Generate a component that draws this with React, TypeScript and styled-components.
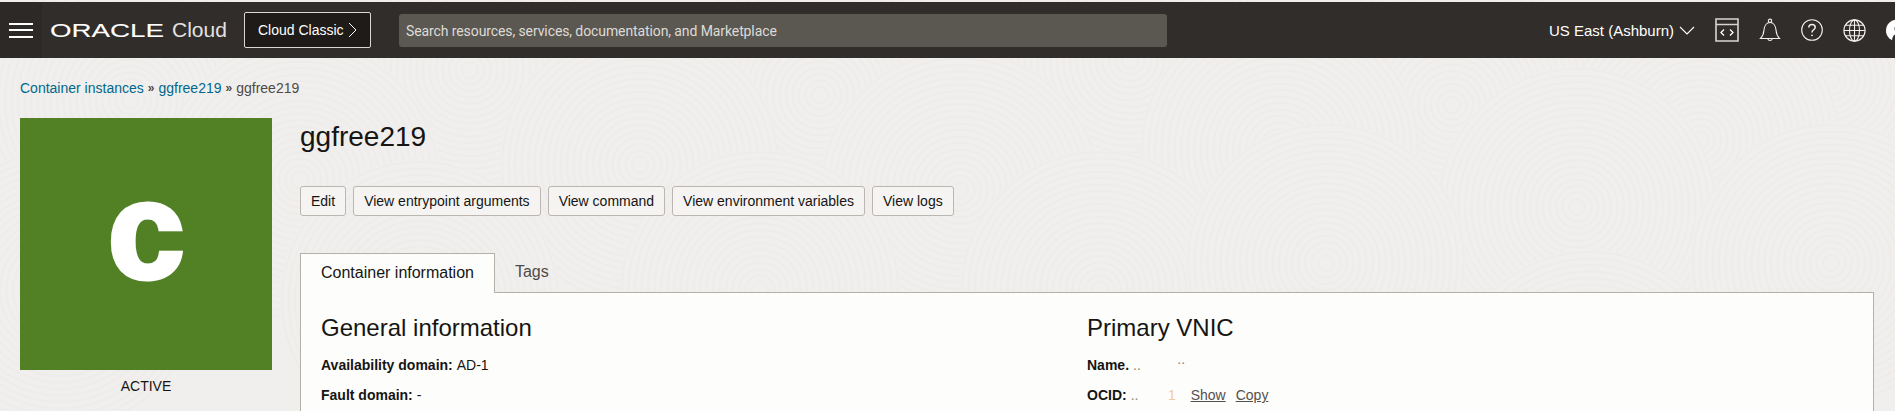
import React from "react";
import styled, { createGlobalStyle } from "styled-components";

const GlobalStyle = createGlobalStyle`
  html, body {
    margin: 0;
    padding: 0;
    height: 100%;
    overflow: hidden;
    background: #f1efed;
    font-family: "Liberation Sans", Arial, sans-serif;
    color: #161513;
  }
  * { box-sizing: border-box; }
`;

const Page = styled.div`
  position: relative;
  height: 100vh;
  padding-top: 2px;
  overflow: hidden;
`;

const Texture = styled.svg`
  position: absolute;
  inset: 0;
  width: 100%;
  height: 100%;
`;

const TopBar = styled.header`
  position: relative;
  display: flex;
  align-items: center;
  height: 56px;
  background: #312d2a;
  color: #fff;
`;

const MenuButton = styled.button`
  display: flex;
  flex-direction: column;
  justify-content: center;
  gap: 4.5px;
  width: 42px;
  height: 100%;
  padding: 0 9px;
  border: 0;
  background: #2c2926;
`;

const MenuBar = styled.span`
  display: block;
  height: 2px;
  background: #fff;
`;

const Logo = styled.svg`
  display: block;
  margin-left: 8px;
  flex: none;
`;

const ProductName = styled.span`
  margin-left: 6px;
  width: 72px;
  font-size: 21px;
  color: #e4e2e0;
`;

const ClassicButton = styled.button`
  display: flex;
  align-items: center;
  justify-content: space-between;
  width: 127px;
  height: 36px;
  padding: 0 13px;
  border: 1px solid #d9d6d3;
  border-radius: 2px;
  background: #1f1b18;
  color: #fff;
  font: 14px "Liberation Sans", Arial, sans-serif;
`;

const SearchBox = styled.input`
  width: 768px;
  height: 33px;
  margin-left: 28px;
  padding: 1px 7px 0;
  border: 0;
  border-radius: 3px;
  background: #5b5751;
  color: #e4e2e0;
  font: 14px Roboto, sans-serif;
  letter-spacing: -0.1px;

  &::placeholder {
    color: #dedbd7;
    opacity: 1;
  }
`;

const TopRight = styled.div`
  display: flex;
  align-items: center;
  margin-left: auto;
  margin-right: -13px;
`;

const Region = styled.span`
  display: flex;
  align-items: center;
  gap: 5px;
  margin-right: 20px;
  font-size: 15px;
`;

const IconRow = styled.div`
  display: flex;
  align-items: center;
  gap: 20px;
`;

const Main = styled.main`
  position: relative;
  padding: 0 21px 0 20px;
`;

const Breadcrumb = styled.nav`
  display: flex;
  align-items: center;
  height: 60px;
  font-size: 14px;
  color: #4f4a45;
`;

const CrumbLink = styled.a`
  color: #00688c;
`;

const CrumbSeparator = styled.span`
  margin: 0 4px;
  font-size: 12px;
  font-weight: bold;
  color: #4f4a45;
`;

const Content = styled.div`
  display: flex;
  gap: 28px;
`;

const StatusColumn = styled.aside`
  flex: none;
  width: 252px;
`;

const Badge = styled.div`
  display: flex;
  align-items: center;
  justify-content: center;
  height: 252px;
  background: #518124;
  color: #fff;
  font: bold 137px/1 "Liberation Sans", Arial, sans-serif;
  -webkit-text-stroke: 5px #fff;
`;

const BadgeLetter = styled.span`
  display: block;
  margin-top: -27px;
`;

const StatusLabel = styled.div`
  margin-top: 8px;
  text-align: center;
  font-size: 14px;
  line-height: 16px;
`;

const Details = styled.section`
  flex: 1;
  min-width: 0;
`;

const Title = styled.h1`
  margin: 0;
  font-size: 28px;
  font-weight: 400;
  line-height: 32px;
  height: 68px;
  padding-top: 3px;
`;

const Actions = styled.div`
  display: flex;
  gap: 7px;
  height: 67px;
`;

const ActionButton = styled.button`
  height: 30px;
  padding: 0 10px;
  border: 1px solid #bcb6b1;
  border-radius: 3px;
  background: #f5f4f2;
  color: #161513;
  font: 14px "Liberation Sans", Arial, sans-serif;
`;

const Tabs = styled.div`
  display: flex;
  height: 40px;
`;

const Tab = styled.div<{ $active?: boolean }>`
  position: relative;
  z-index: 1;
  height: ${(p) => (p.$active ? "40px" : "39px")};
  padding: 0 ${(p) => (p.$active ? "20px" : "19px")};
  border: 1px solid ${(p) => (p.$active ? "#b5b0aa" : "transparent")};
  border-bottom: 0;
  background: ${(p) => (p.$active ? "#fdfdfb" : "transparent")};
  color: ${(p) => (p.$active ? "#161513" : "#4f4a45")};
  font-size: 16px;
  line-height: ${(p) => (p.$active ? "37px" : "35px")};
`;

const Panel = styled.div`
  display: grid;
  grid-template-columns: 1fr 1fr;
  height: 200px;
  margin-top: -1px;
  padding: 20px 20px;
  border: 1px solid #b5b0aa;
  background: #fdfdfb;
`;

const SectionTitle = styled.h2`
  margin: 0 0 13px;
  font-size: 24px;
  font-weight: 400;
  line-height: 30px;
`;

const Field = styled.p`
  display: flex;
  align-items: baseline;
  height: 30px;
  margin: 0;
  font-size: 14px;
  line-height: 18px;
`;

const FieldLabel = styled.strong`
  margin-right: 4px;
`;

const Redacted = styled.span<{ $width: number }>`
  display: flex;
  justify-content: space-between;
  width: ${(p) => p.$width}px;
  color: #8a8580;
`;

const Speck = styled.span<{ $tint?: string; $raised?: boolean; $inset?: number }>`
  margin-right: ${(p) => p.$inset ?? 0}px;
  color: ${(p) => p.$tint ?? "#8a8580"};
  transform: translateY(${(p) => (p.$raised ? "-6px" : "0")});
`;

const TextLink = styled.a`
  margin-left: 10px;
  color: #55504b;
  text-decoration: underline;
`;

const Swirl = ({ cx, cy }: { cx: number; cy: number }) => (
  <g>
    <circle cx={cx} cy={cy} r={140} fill="#f1efed" />
    {Array.from({ length: 21 }, (_, i) => (
      <circle key={i} cx={cx} cy={cy} r={8 + i * 6.5} fill="none" stroke="#eeecea" strokeWidth={2} />
    ))}
  </g>
);

const swirls = [
  [1831, 80], [1452, 105], [1130, 60], [820, 95], [470, 70], [130, 100],
  [1700, 140], [1280, 150], [960, 190], [640, 165], [300, 180],
  [1577, 207], [1100, 290], [1326, 263], [1831, 263], [760, 290], [420, 300], [60, 290], [1590, 390],
];

const App: React.FC = () => {
  return (
    <Page>
      <GlobalStyle />
      <Texture aria-hidden="true">
        {swirls.map(([cx, cy]) => (
          <Swirl key={`${cx}-${cy}`} cx={cx} cy={cy} />
        ))}
      </Texture>

      <TopBar>
        <MenuButton aria-label="Menu">
          <MenuBar />
          <MenuBar />
          <MenuBar />
        </MenuButton>
        <Logo width="116" height="24" viewBox="0 0 116 24">
          <text
            x="0"
            y="19"
            textLength="114"
            lengthAdjust="spacingAndGlyphs"
            fontFamily="Liberation Sans"
            fontSize="19"
            fill="#fff"
            stroke="#fff"
            strokeWidth="0.1"
          >
            ORACLE
          </text>
        </Logo>
        <ProductName>Cloud</ProductName>
        <ClassicButton>
          Cloud Classic
          <svg width="9" height="16" viewBox="0 0 9 16" fill="none" stroke="#fff" strokeWidth="1">
            <path d="M1 1l7 7-7 7" />
          </svg>
        </ClassicButton>
        <SearchBox placeholder="Search resources, services, documentation, and Marketplace" />

        <TopRight>
          <Region>
            US East (Ashburn)
            <svg width="16" height="9" viewBox="0 0 16 9" fill="none" stroke="#fff" strokeWidth="1.1">
              <path d="M1 1l7 7 7-7" />
            </svg>
          </Region>
          <IconRow>
            <svg width="24" height="24" viewBox="0 0 24 24" fill="none" stroke="#d8d6d3">
              <path strokeWidth="1.6" d="M1 1h22v22H1zM1 6.5h22" />
              <path strokeWidth="1.3" stroke="#fff" d="M9 11.5l-3 3 3 3M15 11.5l3 3-3 3" />
            </svg>
            <svg width="22" height="24" viewBox="0 0 22 24" fill="none" stroke="#f2f1ef" strokeWidth="1.1">
              <path d="M1.5 20.5c2.6-2.6 3.2-4.8 3.5-8.5.3-4 2.5-7.5 6-7.5s5.7 3.5 6 7.5c.3 3.7.9 5.9 3.5 8.5z" />
              <circle cx="11" cy="2.8" r="1.7" />
              <path d="M8.8 20.8a2.3 2.3 0 0 0 4.4 0" />
            </svg>
            <svg width="22" height="22" viewBox="0 0 22 22" fill="none" stroke="#f2f1ef" strokeWidth="1.1">
              <circle cx="11" cy="11" r="10.3" />
              <path strokeWidth="1.5" d="M7.8 8.6c0-2 1.5-3.2 3.3-3.2s3.1 1.1 3.1 2.8c0 2.6-3.2 2.5-3.2 5.3" />
              <circle cx="11" cy="16.3" r=".9" fill="#f2f1ef" stroke="none" />
            </svg>
            <svg width="23" height="23" viewBox="0 0 23 23" fill="none" stroke="#f2f1ef" strokeWidth="1.1">
              <circle cx="11.5" cy="11.5" r="10.6" />
              <ellipse cx="11.5" cy="11.5" rx="5" ry="10.6" />
              <path d="M11.5 1v21M1 11.5h21M2.5 6.3h18M2.5 16.7h18" />
            </svg>
            <svg width="22" height="23" viewBox="0 0 22 23">
              <circle cx="11" cy="11.5" r="11" fill="#fff" />
              <circle cx="13" cy="9.5" r="4.5" fill="#312d2a" />
              <path d="M6 22c0-5 3-7.5 7-7.5s6 2.5 7 5l-5 3z" fill="#312d2a" />
            </svg>
          </IconRow>
        </TopRight>
      </TopBar>

      <Main>
        <Breadcrumb>
          <CrumbLink>Container instances</CrumbLink>
          <CrumbSeparator>»</CrumbSeparator>
          <CrumbLink>ggfree219</CrumbLink>
          <CrumbSeparator>»</CrumbSeparator>
          <span>ggfree219</span>
        </Breadcrumb>

        <Content>
          <StatusColumn>
            <Badge>
              <BadgeLetter>c</BadgeLetter>
            </Badge>
            <StatusLabel>ACTIVE</StatusLabel>
          </StatusColumn>

          <Details>
            <Title>ggfree219</Title>
            <Actions>
              <ActionButton>Edit</ActionButton>
              <ActionButton>View entrypoint arguments</ActionButton>
              <ActionButton>View command</ActionButton>
              <ActionButton>View environment variables</ActionButton>
              <ActionButton>View logs</ActionButton>
            </Actions>
            <Tabs>
              <Tab $active>Container information</Tab>
              <Tab>Tags</Tab>
            </Tabs>
            <Panel>
              <div>
                <SectionTitle>General information</SectionTitle>
                <Field>
                  <FieldLabel>Availability domain:</FieldLabel> AD-1
                </Field>
                <Field>
                  <FieldLabel>Fault domain:</FieldLabel> -
                </Field>
              </div>
              <div>
                <SectionTitle>Primary VNIC</SectionTitle>
                <Field>
                  <FieldLabel>Name.</FieldLabel>
                  <Redacted $width={52}>
                    <Speck>..</Speck>
                    <Speck $raised>..</Speck>
                  </Redacted>
                </Field>
                <Field>
                  <FieldLabel>OCID:</FieldLabel>
                  <Redacted $width={50}>
                    <Speck>..</Speck>
                    <Speck $tint="#f5c99a" $inset={5}>1</Speck>
                  </Redacted>
                  <TextLink>Show</TextLink>
                  <TextLink>Copy</TextLink>
                </Field>
              </div>
            </Panel>
          </Details>
        </Content>
      </Main>
    </Page>
  );
};

export default App;
